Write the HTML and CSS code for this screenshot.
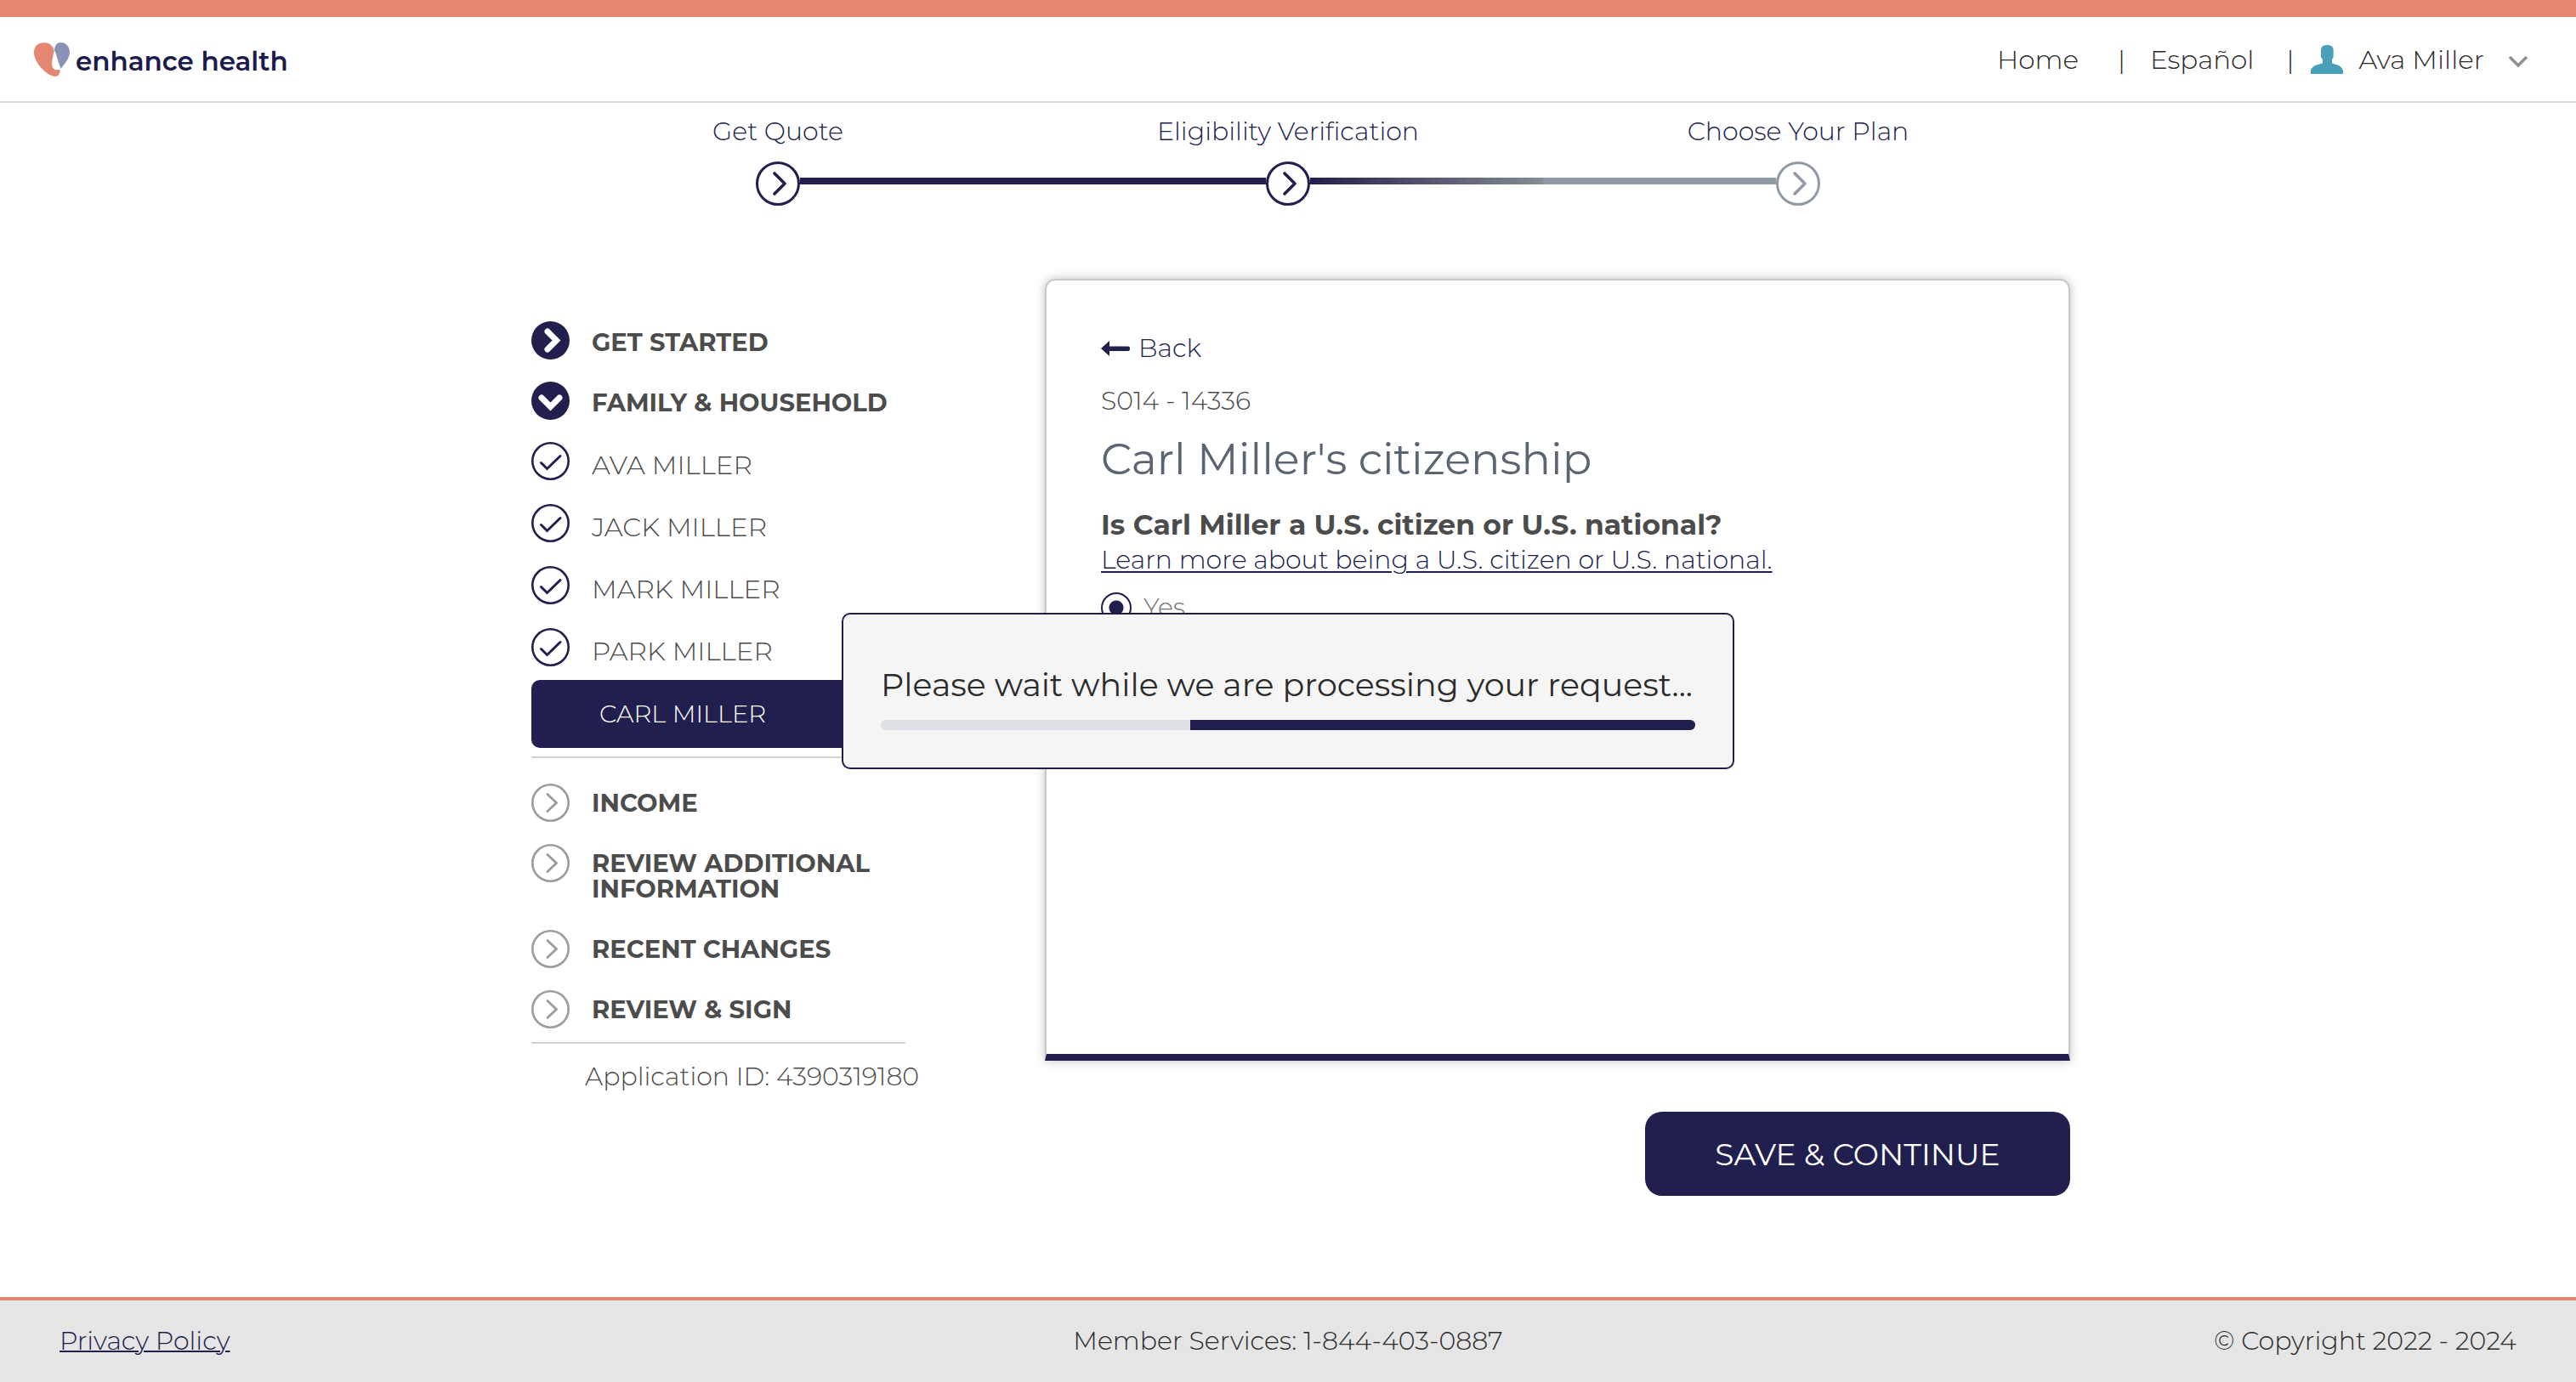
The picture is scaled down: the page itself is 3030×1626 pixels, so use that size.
FILE: index.html
```html
<!DOCTYPE html>
<html lang="en">
<head>
<meta charset="utf-8">
<title>Enhance Health - Eligibility Verification</title>
<link rel="stylesheet" href="styles.css">
</head>
<body>
<svg class="defs" aria-hidden="true">
  <symbol id="step" viewBox="0 0 52 52"><circle cx="26" cy="26" r="24.5" fill="#fff" stroke="currentColor" stroke-width="3"/><path d="M22 14 34 26 22 38" fill="none" stroke="currentColor" stroke-width="3.6" stroke-linecap="round" stroke-linejoin="round"/></symbol>
  <symbol id="right-solid" viewBox="0 0 45 45"><circle cx="22.500" cy="22.500" r="22.500" fill="currentColor"/><path d="M19 12 29.500 22.500 19 33" fill="none" stroke="#fff" stroke-width="7" stroke-linecap="round"/></symbol>
  <symbol id="down-solid" viewBox="0 0 45 45"><circle cx="22.500" cy="22.500" r="22.500" fill="currentColor"/><path d="M12 19 22.500 29.500 33 19" fill="none" stroke="#fff" stroke-width="7" stroke-linecap="round"/></symbol>
  <symbol id="check" viewBox="0 0 45 45"><circle cx="22.500" cy="22.500" r="21.200" fill="none" stroke="currentColor" stroke-width="2.600"/><path d="M11.500 24.500 18.500 31.500 34 16.500" fill="none" stroke="currentColor" stroke-width="3" stroke-linecap="round"/></symbol>
  <symbol id="right" viewBox="0 0 45 45"><circle cx="22.500" cy="22.500" r="21.200" fill="none" stroke="currentColor" stroke-width="2.600"/><path d="M19 12.500 29.500 22.500 19 32.500" fill="none" stroke="currentColor" stroke-width="2.800" stroke-linecap="round"/></symbol>
</svg>

<header class="header">
  <a class="logo" href="#">
    <svg class="logo-mark" viewBox="0 0 126 120" aria-hidden="true">
      <path fill="#e58673" d="M36 1C10 1 0 16 0 36c0 36 46 82 74 84 14 0 19-12 17-26-8 6-25 4-27-12-2-20 5-40 7-52C66 10 54 1 36 1Z"/>
      <path fill="#8b92b6" d="M94 0C78 0 73 14 72 28c8 14 13 44 23 64 13-16 31-36 31-58C126 14 112 0 94 0Z"/>
    </svg>
    <span class="logo-name">enhance health</span>
  </a>
  <nav class="nav">
    <a href="#">Home</a>
    <span class="bar bar-home">|</span>
    <a href="#">Español</a>
    <span class="bar bar-lang">|</span>
    <button class="user" type="button">
      <svg class="avatar" viewBox="0 0 114 102" aria-hidden="true"><path fill="#4aa0b9" d="M58 0c15 0 22 7 22 18v22c0 5-3 8-5 11v13c14 6 39 8 39 30v8H0v-8c0-22 25-24 42-30V51c-3-3-6-6-6-11V18C36 7 43 0 58 0Z"/></svg>
      <span>Ava Miller</span>
      <svg class="caret" viewBox="0 0 24 16" aria-hidden="true"><path d="M2 3 12 13 22 3" fill="none" stroke="#8f8f8f" stroke-width="3.5"/></svg>
    </button>
  </nav>
</header>

<ol class="stepper">
  <li class="step"><span>Get Quote</span><svg class="step-icon"><use href="#step"/></svg></li>
  <li class="step step-done"><span>Eligibility Verification</span><svg class="step-icon"><use href="#step"/></svg></li>
  <li class="step step-next"><span>Choose Your Plan</span><svg class="step-icon"><use href="#step"/></svg></li>
</ol>

<main class="layout">
  <aside class="side">
    <ul class="menu menu-open">
      <li class="item head"><svg class="icon"><use href="#right-solid"/></svg><a href="#">GET STARTED</a></li>
      <li class="item head"><svg class="icon"><use href="#down-solid"/></svg><a href="#">FAMILY &amp; HOUSEHOLD</a></li>
      <li class="item person"><svg class="icon"><use href="#check"/></svg><a href="#">AVA MILLER</a></li>
      <li class="item person"><svg class="icon"><use href="#check"/></svg><a href="#">JACK MILLER</a></li>
      <li class="item person"><svg class="icon"><use href="#check"/></svg><a href="#">MARK MILLER</a></li>
      <li class="item person"><svg class="icon"><use href="#check"/></svg><a href="#">PARK MILLER</a></li>
      <li><a class="current" href="#" aria-current="page">CARL MILLER</a></li>
    </ul>
    <ul class="menu menu-todo">
      <li class="item todo"><svg class="icon"><use href="#right"/></svg><a href="#">INCOME</a></li>
      <li class="item todo"><svg class="icon"><use href="#right"/></svg><a href="#">REVIEW ADDITIONAL INFORMATION</a></li>
      <li class="item todo"><svg class="icon"><use href="#right"/></svg><a href="#">RECENT CHANGES</a></li>
      <li class="item todo"><svg class="icon"><use href="#right"/></svg><a href="#">REVIEW &amp; SIGN</a></li>
    </ul>
    <p class="app-id">Application ID: 4390319180</p>
  </aside>

  <form class="form">
    <section class="card">
      <a class="back" href="#"><svg class="arrow" viewBox="0 0 34 20" aria-hidden="true"><path fill="currentColor" d="M0 10 10 1V7.500H32a2 2 0 0 1 2 2V11a2 2 0 0 1-2 2H10v6Z"/></svg>Back</a>
      <p class="code">S014 - 14336</p>
      <h1>Carl Miller's citizenship</h1>
      <h2>Is Carl Miller a U.S. citizen or U.S. national?</h2>
      <a class="learn" href="#">Learn more about being a U.S. citizen or U.S. national.</a>
      <label class="option"><input type="radio" name="citizen" checked>Yes</label>
    </section>
    <button class="save" type="button">SAVE &amp; CONTINUE</button>
  </form>
</main>

<footer class="footer">
  <a href="#">Privacy Policy</a>
  <span>Member Services: 1-844-403-0887</span>
  <span class="copy">© Copyright 2022 - 2024</span>
</footer>

<div class="wait" role="alertdialog" aria-labelledby="wait-text">
  <p id="wait-text">Please wait while we are processing your request...</p>
  <div class="progress" role="progressbar" aria-labelledby="wait-text"><div class="progress-fill"></div></div>
</div>
</body>
</html>
```
FILE: styles.css
```css
:root {
  --navy: #211f4d;
  --coral: #e58673;
  --text: #4c4c4c;
  --rule: #d3d3d3;
}

* { box-sizing: border-box; }

body {
  margin: 0;
  min-height: 100vh;
  display: flex;
  flex-direction: column;
  border-top: 20px solid var(--coral);
  background: #fff;
  color: var(--text);
  font: 300 30px/40px Montserrat, Inter, "Open Sans", sans-serif;
}

a { color: inherit; text-decoration: none; }
p, h1, h2, ul, ol { margin: 0; padding: 0; list-style: none; }
button { font: inherit; color: inherit; border: 0; background: none; padding: 0; }
.defs { position: absolute; width: 0; height: 0; }

.header {
  display: flex;
  align-items: center;
  justify-content: space-between;
  height: 101px;
  padding: 0 56px 0 40px;
  border-bottom: 2px solid #d9d9d9;
}
.logo { display: flex; align-items: center; gap: 7px; color: #1b1a4b; font-size: 31px; font-weight: 600; }
.logo-mark { width: 42px; height: 40px; }
.logo-name { padding-top: 4px; }
.nav { display: flex; align-items: center; color: #2b2b2b; font-size: 31px; white-space: nowrap; }
.bar { width: 8px; text-align: center; }
.bar-home { margin: 0 30px 0 46px; }
.bar-lang { margin: 0 21px 0 38px; }
.user { display: flex; align-items: center; gap: 18px; }
.avatar { width: 38px; height: 34px; }
.caret { width: 24px; height: 16px; margin: 4px 0 0 10px; }

.stepper {
  display: grid;
  grid-template-columns: repeat(3, 600px);
  justify-content: center;
  padding-top: 14px;
  color: var(--navy);
  text-align: center;
}
.step { position: relative; display: flex; flex-direction: column; align-items: center; gap: 15px; }
.step-icon { width: 52px; height: 52px; }
.step-next .step-icon { color: #909aa7; }
.step-done::before,
.step-next::before {
  content: "";
  position: absolute;
  left: -274px;
  top: 74px;
  width: 548px;
  height: 8px;
  background: var(--navy);
}
.step-next::before { background: linear-gradient(to right, var(--navy), #858c92 50%, #909aa7 50%); }

.layout {
  display: flex;
  align-items: flex-start;
  gap: 164px;
  width: 100%;
  max-width: 1840px;
  margin: 86px auto 0;
  padding-left: 30px;
}
.side { flex: 0 0 440px; min-width: 0; padding-top: 50px; line-height: 30px; }
.item { display: flex; gap: 26px; }
.icon { flex: none; width: 45px; height: 45px; color: var(--navy); }
.head, .todo { font-size: 29px; font-weight: 700; }
.head { padding-bottom: 26px; }
.head a { padding-top: 10px; }
.person { padding-bottom: 28px; font-size: 31px; }
.person a { padding-top: 12px; }
.menu-open { padding-bottom: 10px; border-bottom: 2px solid var(--rule); }
.person:nth-child(6) { padding-bottom: 16px; }
.current {
  display: block;
  padding: 25px 80px;
  border-radius: 10px;
  background: var(--navy);
  color: #fff;
  font-size: 29px;
}
.menu-todo { display: grid; gap: 26px; padding: 30px 0 16px; border-bottom: 2px solid var(--rule); }
.todo .icon { color: #9c9c9c; }
.todo a { padding: 8px 0 7px; }
.app-id { padding: 24px 0 0 63px; white-space: nowrap; }

.form { flex: 1; display: flex; flex-direction: column; align-items: flex-end; }
.card {
  display: flex;
  flex-direction: column;
  align-items: flex-start;
  width: 100%;
  min-height: 920px;
  padding: 60px 64px;
  border: 2px solid #c8c8c8;
  border-bottom: 8px solid var(--navy);
  border-radius: 12px 12px 0 0;
  box-shadow: 0 0 12px rgba(0, 0, 0, .25);
}
.back { display: flex; align-items: center; gap: 10px; color: var(--navy); }
.arrow { width: 34px; height: 20px; }
.code { margin-top: 22px; }
h1 { margin-top: 18px; color: #5b6572; font-size: 51px; font-weight: 400; line-height: 60px; }
h2 { margin-top: 25px; font-size: 33px; font-weight: 700; line-height: 44px; }
.learn { color: var(--navy); text-decoration: underline; text-decoration-thickness: 2px; text-underline-offset: 3px; }
.option { display: flex; align-items: center; gap: 14px; margin-top: 16px; color: #757575; }
input[type="radio"] {
  appearance: none;
  width: 36px;
  height: 36px;
  margin: 0;
  border: 2px solid var(--navy);
  border-radius: 50%;
  background: radial-gradient(circle, var(--navy) 8px, transparent 9px);
}
.save {
  width: 500px;
  height: 99px;
  margin-top: 60px;
  border-radius: 20px;
  background: var(--navy);
  color: #fff;
  font-size: 36px;
  font-weight: 400;
}

.footer {
  display: grid;
  grid-template-columns: 1fr auto 1fr;
  align-items: center;
  height: 100px;
  margin-top: auto;
  padding: 0 70px;
  border-top: 4px solid var(--coral);
  background: #e5e5e5;
  color: #2b2b2b;
}
.footer a { justify-self: start; color: var(--navy); text-decoration: underline; text-decoration-thickness: 2px; }
.copy { text-align: right; }

.wait {
  position: fixed;
  left: 50%;
  top: 50%;
  transform: translate(-50%, -50%);
  width: 1050px;
  padding: 58px 44px 44px;
  border: 2px solid #201f4c;
  border-radius: 10px;
  background: #f5f5f5;
  color: #2b2b2b;
  font-size: 38px;
  font-weight: 400;
  line-height: 50px;
  white-space: nowrap;
}
.progress { display: flex; justify-content: flex-end; margin-top: 16px; height: 12px; border-radius: 6px; overflow: hidden; background: #dde1e6; }
.progress-fill { width: 62%; background: var(--navy); }
```
